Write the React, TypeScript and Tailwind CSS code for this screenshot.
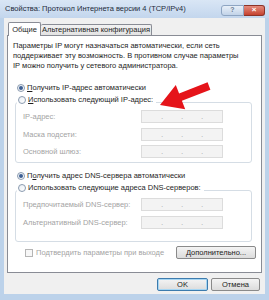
import type { ReactNode } from "react";

const font = { fontFamily: '"Liberation Sans", Arial, sans-serif' };

function Radio({ checked }: { checked?: boolean }) {
  return (
    <span className="flex h-[8px] w-[8px] shrink-0 items-center justify-center rounded-full border border-[#8a9bb0] bg-gradient-to-br from-[#e9eef4] to-[#ffffff]">
      {checked ? <span className="h-[4px] w-[4px] rounded-full bg-[#3d5f93]" /> : null}
    </span>
  );
}

function IpField() {
  return (
    <div className="grid h-[13px] w-[82px] grid-cols-4 border border-[#dcdcdc] bg-[#f3f3f3] text-[8px] leading-[11px] text-[#a9a9a9]">
      <span />
      <span className="-ml-[1px]">.</span>
      <span className="-ml-[1px]">.</span>
      <span className="-ml-[1px]">.</span>
    </div>
  );
}

function FieldRow({ label, className }: { label: string; className?: string }) {
  return (
    <div className={`flex h-[13px] items-center pl-[7px] pr-[28px] ${className ?? ""}`}>
      <span className="flex-1 whitespace-nowrap text-[#a3a3a3]">{label}</span>
      <IpField />
    </div>
  );
}

function Group({ legend, children, className }: { legend: ReactNode; children: ReactNode; className?: string }) {
  return (
    <fieldset className={`ml-[7px] w-[237px] rounded-[3px] border border-[#d5dde5] ${className ?? ""}`}>
      <legend className="ml-[1px] pb-[4px] pr-[3px] pl-[1px]">{legend}</legend>
      {children}
    </fieldset>
  );
}

function Button({ children, primary, className }: { children: ReactNode; primary?: boolean; className?: string }) {
  return (
    <div
      className={`flex h-[13px] items-center justify-center rounded-[2px] border bg-gradient-to-b from-[#f4f4f4] to-[#dcdcdc] text-[7.5px] text-[#222] ${
        primary ? "border-[#3d7bad] shadow-[inset_0_0_0_1px_#a6d6f3]" : "border-[#8a8a8a]"
      } ${className ?? ""}`}
    >
      {children}
    </div>
  );
}

export default function App() {
  return (
    <div className="relative flex h-[300px] w-[269px] flex-col overflow-hidden bg-[#bcd2ea]" style={font}>
      {/* title bar */}
      <div className="flex h-[18px] items-center bg-gradient-to-b from-[#d9e6f5] to-[#c3d6ed] pl-[5px] pr-[4px]">
        <span className="flex-1 whitespace-nowrap text-[7.5px] text-[#1d2a3a]">
          Свойства: Протокол Интернета версии 4 (TCP/IPv4)
        </span>
        <div className="mt-[2px] flex h-[11px]">
          <div className="flex w-[23px] items-center justify-center rounded-l-[3px] border border-[#8ea5c2] bg-gradient-to-b from-[#e8f0f9] to-[#c2d3e8] text-[7px] font-bold text-[#6d7f95]">
            ?
          </div>
          <div className="flex w-[21px] items-center justify-center rounded-r-[3px] border border-l-0 border-[#8b3328] bg-gradient-to-b from-[#e48a7c] to-[#c4412f] text-[8px] font-bold leading-none text-white">
            ×
          </div>
        </div>
      </div>

      {/* body */}
      <div className="mx-[4px] mb-[6px] flex flex-1 flex-col bg-[#f0f0f0]">
        {/* tabs */}
        <div className="relative z-10 flex items-end pl-[4px] pt-[4px] text-[7.5px]">
          <div className="-mb-[1px] flex h-[14px] w-[33px] items-center justify-center rounded-t-[2px] border border-b-0 border-[#898c95] bg-white text-[#1e1e1e]">
            Общие
          </div>
          <div className="flex h-[11px] w-[111px] items-center justify-center whitespace-nowrap rounded-t-[2px] border border-b-0 border-l-0 border-[#898c95] bg-gradient-to-b from-[#f2f2f2] to-[#e3e3e3] text-[#1e1e1e]">
            Альтернативная конфигурация
          </div>
        </div>

        {/* panel */}
        <div className="mx-[3px] flex h-[238px] flex-col border border-[#898c95] bg-white text-[7.5px] text-[#1e1e1e]">
          <p className="ml-[5px] mt-[5px] whitespace-nowrap leading-[10px]">
            Параметры IP могут назначаться автоматически, если сеть
            <br />
            поддерживает эту возможность. В противном случае параметры
            <br />
            IP можно получить у сетевого администратора.
          </p>

          <label className="ml-[9px] mt-[11px] flex h-[12px] items-center gap-[2px]">
            <Radio checked />
            <span>
              <u>П</u>олучить IP-адрес автоматически
            </span>
          </label>

          <Group
            legend={
              <span className="flex h-[12px] items-center gap-[2px]">
                <Radio />
                <span>
                  <u>И</u>спользовать следующий IP-адрес:
                </span>
              </span>
            }
            className="pb-[4px]"
          >
            <FieldRow label="IP-адрес:" />
            <FieldRow label="Маска подсети:" className="mt-[5px]" />
            <FieldRow label="Основной шлюз:" className="mt-[4px]" />
          </Group>

          <label className="ml-[9px] mt-[7px] flex h-[12px] items-center gap-[2px]">
            <Radio checked />
            <span>
              П<u>о</u>лучить адрес DNS-сервера автоматически
            </span>
          </label>

          <Group
            legend={
              <span className="flex h-[12px] items-center gap-[2px]">
                <Radio />
                <span>Использовать следующие адреса DNS-серверов:</span>
              </span>
            }
            className="pb-[12px]"
          >
            <FieldRow label="Предпочитаемый DNS-сервер:" />
            <FieldRow label="Альтернативный DNS-сервер:" className="mt-[5px]" />
          </Group>

          <div className="mt-[4px] flex h-[13px] items-center pl-[17px] pr-[5px]">
            <span className="h-[8px] w-[8px] border border-[#b5b5b5] bg-[#f7f7f7]" />
            <span className="ml-[3px] flex-1 whitespace-nowrap text-[#a3a3a3]">Подтвердить параметры при выходе</span>
            <Button className="w-[80px]">
              <span>
                <u>Д</u>ополнительно...
              </span>
            </Button>
          </div>
        </div>

        {/* dialog buttons */}
        <div className="mt-[5px] flex justify-end gap-[3px] pr-[5px]">
          <Button primary className="w-[51px]">
            OK
          </Button>
          <Button className="w-[49px]">Отмена</Button>
        </div>
      </div>

      {/* red annotation arrow */}
      <svg className="pointer-events-none absolute left-0 top-0" width="269" height="300" viewBox="0 0 269 300">
        <polygon
          points="160,105 175.8,85 179.1,93.4 207.6,82.3 210.4,89.7 181.9,100.8 185.2,109.2"
          fill="#e5141a"
        />
      </svg>
    </div>
  );
}
